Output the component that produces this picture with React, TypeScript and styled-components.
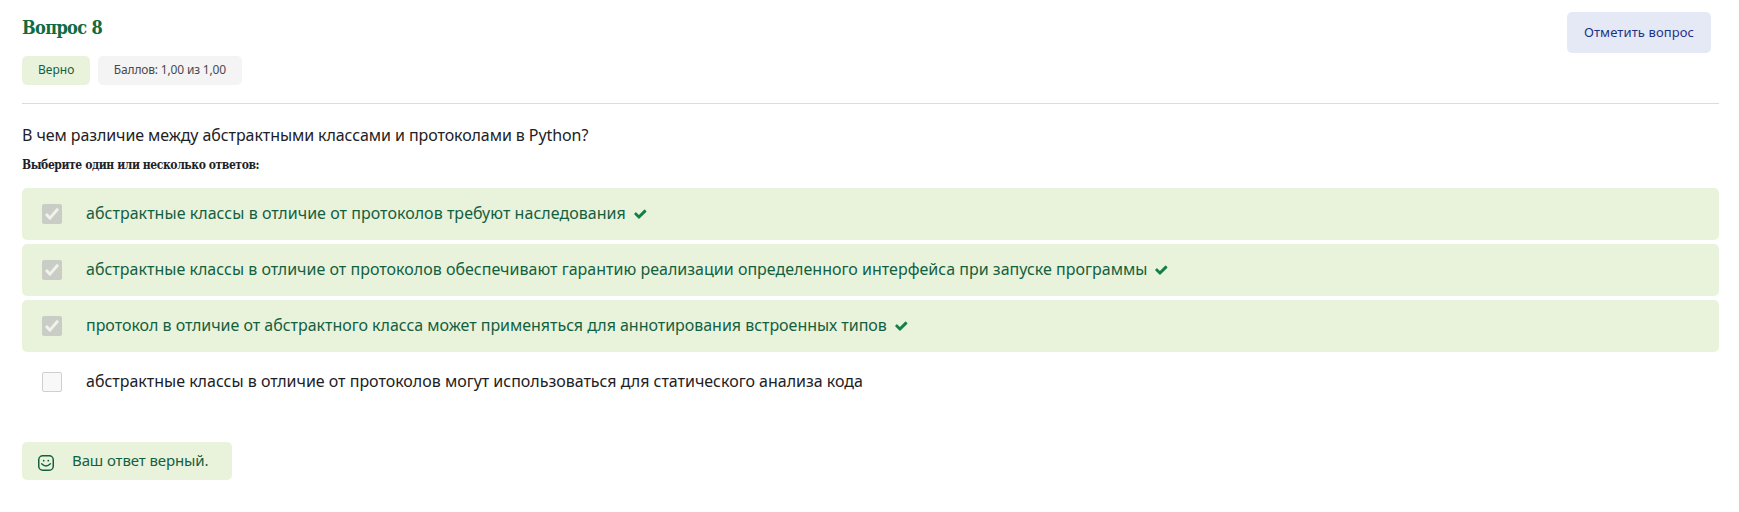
import React from 'react';
import styled, { createGlobalStyle } from 'styled-components';

const GlobalStyle = createGlobalStyle`
  body {
    margin: 0;
    background: #fff;
    color: #1d2125;
    font-family: "Noto Sans", "Liberation Sans", sans-serif;
  }
`;

const serif = '"DejaVu Serif Condensed", "DejaVu Serif", serif';

const Question = styled.main`
  padding: 12px 20px 0 22px;
`;

const Header = styled.header`
  display: flex;
  justify-content: space-between;
  align-items: flex-start;
  height: 91px;
  border-bottom: 1px solid #dcdcde;
`;

const Title = styled.h3`
  margin: 3px 0 16px;
  font: bold 18px/25px ${serif};
  letter-spacing: -0.65px;
  color: #0f6b43;
`;

const Badges = styled.div`
  display: flex;
  gap: 8px;
`;

const Badge = styled.span<{ $correct?: boolean; $spacing: number }>`
  box-sizing: border-box;
  height: 29px;
  padding: 0 ${(p) => (p.$correct ? 15.5 : 16)}px 0 16px;
  border-radius: 5px;
  font-size: 12px;
  line-height: 28px;
  white-space: nowrap;
  letter-spacing: ${(p) => p.$spacing}px;
  background: ${(p) => (p.$correct ? '#e9f3dc' : '#f4f4f4')};
  color: ${(p) => (p.$correct ? '#13603f' : '#4a4a4f')};
`;

const FlagButton = styled.button`
  width: 144px;
  height: 41px;
  margin-right: 8px;
  padding: 0 0 2px;
  border: 0;
  border-radius: 5px;
  background: #e5e9f5;
  color: #1c3488;
  font: 13px "Noto Sans", sans-serif;
  letter-spacing: 0.1px;
  white-space: nowrap;
`;

const QuestionText = styled.p`
  margin: 18px 0 0;
  font-size: 16px;
  line-height: 26px;
  letter-spacing: -0.085px;
`;

const Prompt = styled.div`
  margin: 8px 0 14px;
  font: bold 12px/18px ${serif};
  letter-spacing: -0.415px;
`;

const Answers = styled.div`
  display: flex;
  flex-direction: column;
  gap: 4px;
`;

const Answer = styled.label<{ $correct: boolean; $spacing: number }>`
  display: flex;
  align-items: center;
  box-sizing: border-box;
  height: 52px;
  padding-left: 20px;
  border-radius: 5px;
  font-size: 16px;
  line-height: 24px;
  white-space: nowrap;
  letter-spacing: ${(p) => p.$spacing}px;
  background: ${(p) => (p.$correct ? '#e9f3dc' : 'transparent')};
  color: ${(p) => (p.$correct ? '#13603f' : '#1d2125')};
`;

const Box = styled.span<{ $checked: boolean }>`
  display: flex;
  box-sizing: border-box;
  width: 20px;
  height: 20px;
  margin-right: 24px;
  border: 1px solid ${(p) => (p.$checked ? '#c9cdc6' : '#cfcfcf')};
  border-radius: 2px;
  background: ${(p) => (p.$checked ? '#c9cdc6' : '#f8f8f8')};
`;

const AnswerText = styled.span`
  margin-bottom: 3px;
`;

const CorrectMark = styled.svg`
  margin-left: 8px;
`;

const Feedback = styled.div`
  display: flex;
  align-items: center;
  box-sizing: border-box;
  width: 210px;
  height: 38px;
  margin-top: 34px;
  padding-left: 16px;
  border-radius: 5px;
  background: #e9f3dc;
  color: #13603f;
  font-size: 15px;
  letter-spacing: -0.115px;
`;

const Smile = styled.svg`
  margin: 4px 18px 0 0;
`;

const FeedbackText = styled.span`
  line-height: 22px;
  margin-bottom: 3px;
`;

const answers = [
  { text: 'абстрактные классы в отличие от протоколов требуют наследования', correct: true, spacing: 0.035 },
  {
    text: 'абстрактные классы в отличие от протоколов обеспечивают гарантию реализации определенного интерфейса при запуске программы',
    correct: true,
    spacing: 0.012,
  },
  {
    text: 'протокол в отличие от абстрактного класса может применяться для аннотирования встроенных типов',
    correct: true,
    spacing: -0.028,
  },
  {
    text: 'абстрактные классы в отличие от протоколов могут использоваться для статического анализа кода',
    correct: false,
    spacing: -0.012,
  },
];

export default function App() {
  return (
    <Question>
      <GlobalStyle />
      <Header>
        <div>
          <Title>Вопрос 8</Title>
          <Badges>
            <Badge $correct $spacing={0.02}>Верно</Badge>
            <Badge $spacing={-0.17}>Баллов: 1,00 из 1,00</Badge>
          </Badges>
        </div>
        <FlagButton>Отметить вопрос</FlagButton>
      </Header>
      <QuestionText>В чем различие между абстрактными классами и протоколами в Python?</QuestionText>
      <Prompt>Выберите один или несколько ответов:</Prompt>
      <Answers>
        {answers.map((a) => (
          <Answer key={a.text} $correct={a.correct} $spacing={a.spacing}>
            <Box $checked={a.correct}>
              {a.correct && (
                <svg width="18" height="18" viewBox="0 0 18 18" fill="none">
                  <path d="M3 8.9 6.9 13.1 15 3.8" stroke="#f0f3ec" strokeWidth="2.9" />
                </svg>
              )}
            </Box>
            <AnswerText>{a.text}</AnswerText>
            {a.correct && (
              <CorrectMark width="13" height="10" viewBox="0 0 13 10">
                <path
                  d="M2.3 3.5 4.9 6 10.1.8Q10.6.3 11.1.8L12.2 1.9Q12.7 2.4 12.2 2.9L5.5 9.4Q4.9 9.9 4.4 9.4L.4 5.5Q0 5 .4 4.6L1.4 3.5Q1.9 3.1 2.3 3.5Z"
                  fill="#128045"
                />
              </CorrectMark>
            )}
          </Answer>
        ))}
      </Answers>
      <Feedback>
        <Smile width="16" height="16" viewBox="0 0 16 16" fill="none" stroke="#13603f">
          <rect x="0.75" y="0.75" width="14.5" height="14.5" rx="4" strokeWidth="1.5" />
          <path d="M3.6 8.8Q8 13.2 12.4 8.8" strokeWidth="1.4" strokeLinecap="round" />
          <circle cx="5.7" cy="5.7" r="0.9" fill="#13603f" stroke="none" />
          <circle cx="10.3" cy="5.7" r="0.9" fill="#13603f" stroke="none" />
        </Smile>
        <FeedbackText>Ваш ответ верный.</FeedbackText>
      </Feedback>
    </Question>
  );
}
